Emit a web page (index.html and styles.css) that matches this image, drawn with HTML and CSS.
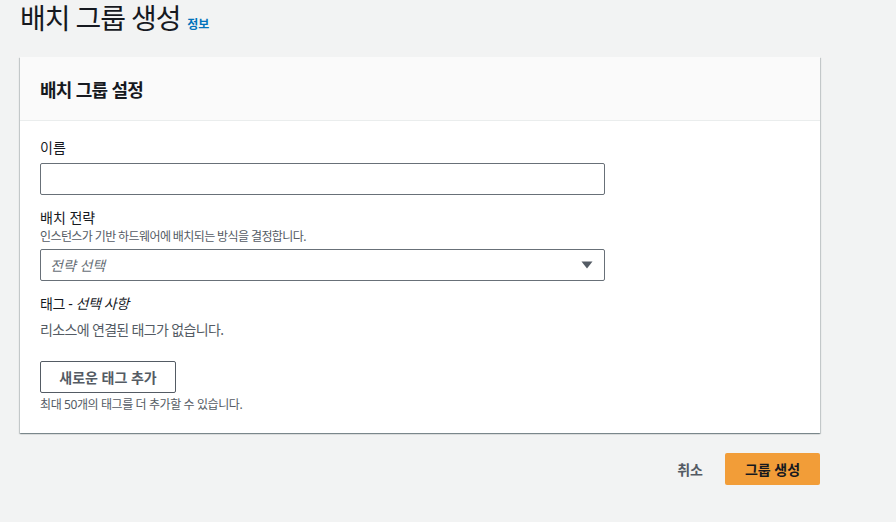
FILE: index.html
```html
<!DOCTYPE html>
<html lang="ko">
<head>
<meta charset="utf-8">
<link rel="stylesheet" href="styles.css">
</head>
<body>
<div class="page">
  <div class="title-row">
    <h1 class="title">배치 그룹 생성</h1>
    <a class="info">정보</a>
  </div>
  <div class="card">
    <div class="card-header">배치 그룹 설정</div>
    <div class="card-body">
      <div class="field">
        <div class="label">이름</div>
        <div class="input"></div>
      </div>
      <div class="field">
        <div class="label">배치 전략</div>
        <div class="desc">인스턴스가 기반 하드웨어에 배치되는 방식을 결정합니다.</div>
        <div class="select">
          <span class="placeholder">전략 선택</span>
          <svg class="caret" width="12" height="8" viewBox="0 0 12 8"><path d="M0.5 0.5 H11.5 L6 7.5 Z" fill="#545b64"/></svg>
        </div>
      </div>
      <div class="field tags">
        <div class="label tag-label">태그 - <i>선택 사항</i></div>
        <div class="empty">리소스에 연결된 태그가 없습니다.</div>
        <button class="btn-normal">새로운 태그 추가</button>
        <div class="hint">최대 50개의 태그를 더 추가할 수 있습니다.</div>
      </div>
    </div>
  </div>
  <div class="actions">
    <button class="btn-link">취소</button>
    <button class="btn-primary">그룹 생성</button>
  </div>
</div>
</body>
</html>
```
FILE: styles.css
```css
html, body {
  margin: 0;
  padding: 0;
  background: #f2f3f3;
}
body {
  font-family: "Noto Sans", "Noto Sans CJK KR", sans-serif;
  color: #16191f;
  font-size: 14px;
}
.page {
  width: 800px;
  padding: 0 20px;
}
.title-row {
  display: flex;
  align-items: baseline;
  gap: 7px;
  height: 36px;
}
.title {
  margin: 0;
  font-size: 28px;
  font-weight: 400;
  line-height: 36px;
  letter-spacing: -1.1px;
}
.info {
  font-size: 12px;
  font-weight: 700;
  color: #0073bb;
}
.card {
  margin-top: 21px;
  background: #fff;
  box-shadow: 0 1px 1px 0 rgba(0,28,36,0.3), 1px 1px 1px 0 rgba(0,28,36,0.15), -1px 1px 1px 0 rgba(0,28,36,0.15);
}
.card-header {
  background: #fafafa;
  border-bottom: 1px solid #eaeded;
  height: 64px;
  box-sizing: border-box;
  padding: 0 20px;
  display: flex;
  align-items: center;
  font-size: 18px;
  font-weight: 700;
  letter-spacing: -0.7px;
}
.card-body {
  padding: 16px 20px 20px;
  width: 565px;
}
.label {
  font-size: 14px;
  line-height: 22px;
}
.tag-label {
  letter-spacing: -0.4px;
}
.label i {
  font-style: italic;
}
.field {
  margin-bottom: 12px;
}
.input {
  margin-top: 4px;
  height: 32px;
  box-sizing: border-box;
  border: 1px solid #687078;
  border-radius: 2px;
  background: #fff;
}
.desc {
  font-size: 12px;
  line-height: 16px;
  color: #545b64;
  letter-spacing: -0.6px;
}
.select {
  margin-top: 4px;
  height: 32px;
  box-sizing: border-box;
  border: 1px solid #687078;
  border-radius: 2px;
  display: flex;
  align-items: center;
  justify-content: space-between;
  padding: 0 11px 0 9px;
}
.placeholder {
  font-style: italic;
  color: #687078;
  font-size: 14px;
}
.tags {
  margin-bottom: 0;
  margin-top: 10px;
}
.empty {
  color: #545b64;
  margin-top: 4px;
  line-height: 22px;
  letter-spacing: -0.65px;
}
.btn-normal {
  margin-top: 20px;
  height: 32px;
  width: 136px;
  background: #fff;
  border: 1px solid #545b64;
  border-radius: 2px;
  font-family: inherit;
  font-size: 14px;
  font-weight: 700;
  color: #545b64;
  padding: 0;
}
.hint {
  font-size: 12px;
  color: #545b64;
  line-height: 16px;
  margin-top: 4px;
  letter-spacing: -0.4px;
}
.actions {
  display: flex;
  justify-content: flex-end;
  align-items: center;
  gap: 22px;
  margin-top: 20px;
}
.btn-link {
  background: none;
  border: none;
  font-family: inherit;
  font-size: 14px;
  font-weight: 700;
  color: #545b64;
  padding: 0;
}
.btn-primary {
  width: 95px;
  height: 32px;
  background: #f29d38;
  border: none;
  border-radius: 2px;
  font-family: inherit;
  font-size: 14px;
  font-weight: 700;
  color: #16191f;
  padding: 0;
}
```
